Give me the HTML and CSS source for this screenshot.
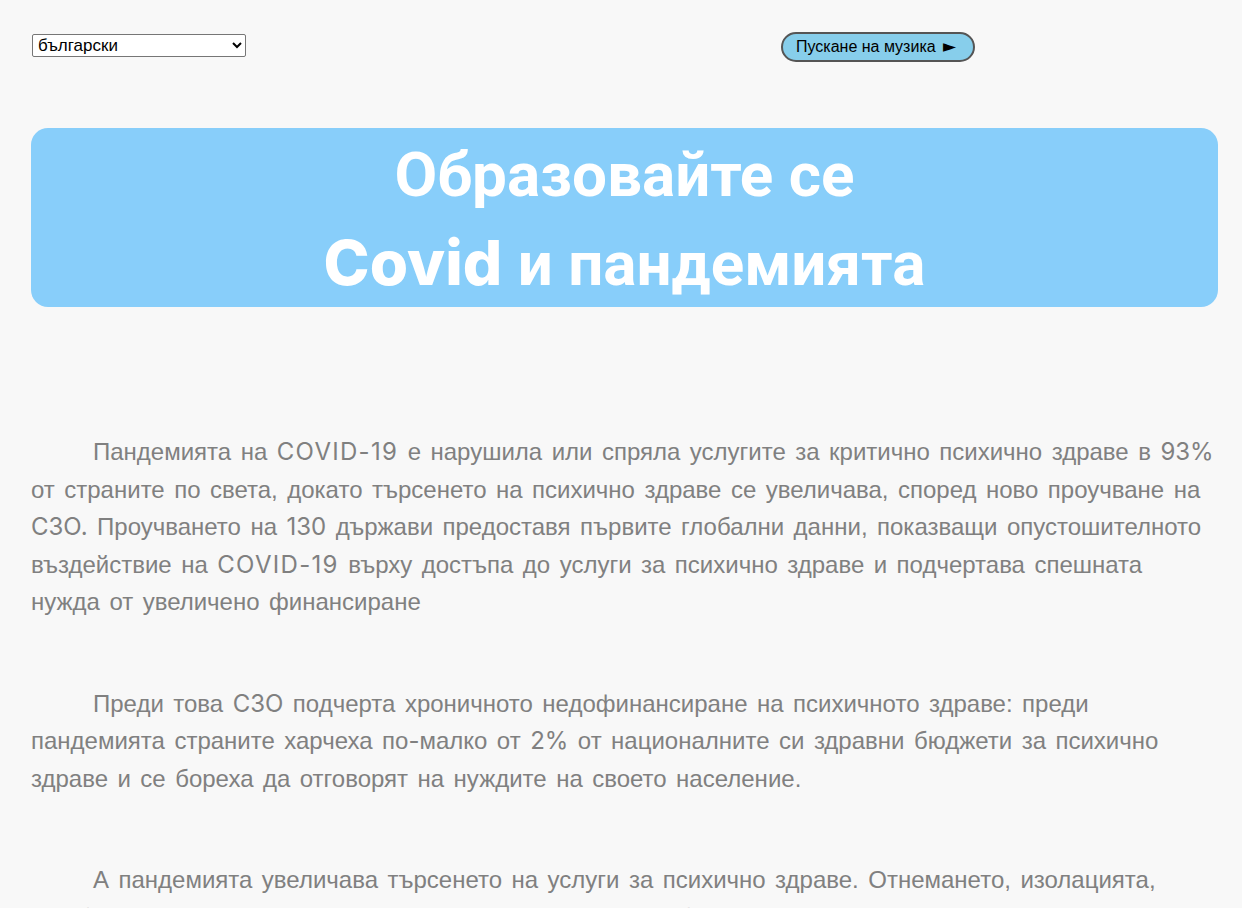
FILE: index.html
```html
<!DOCTYPE html>
<html lang="bg">
<head>
<meta charset="utf-8">
<title>Образовайте се</title>
<link rel="stylesheet" href="styles.css">
</head>
<body>
<div class="page">
  <header class="topbar">
    <select class="lang">
      <option>български</option>
      <option>English</option>
    </select>
    <button class="music">Пускане на музика <span class="play">►</span></button>
  </header>
  <div class="hero">
    <h1 class="hero-title">Образовайте се<br><span class="latin">Covid</span> и пандемията</h1>
  </div>
  <main class="content">
    <p class="para">Пандемията на <span class="lat wide">COVID-19</span> е нарушила или спряла услугите за критично психично здраве в <span class="lat">93%</span> от страните по света, докато търсенето на психично здраве се увеличава, според ново проучване на <span class="lat">C3O.</span> Проучването на <span class="lat">130</span> държави предоставя първите глобални данни, показващи опустошителното въздействие на <span class="lat wide">COVID-19</span> върху достъпа до услуги за психично здраве и подчертава спешната нужда от увеличено финансиране</p>
    <p class="para">Преди това <span class="lat">C3O</span> подчерта хроничното недофинансиране на психичното здраве: преди пандемията страните харчеха по<span class="lat">-</span>малко от <span class="lat">2%</span> от националните си здравни бюджети за психично здраве и се бореха да отговорят на нуждите на своето население.</p>
    <p class="para">А пандемията увеличава търсенето на услуги за психично здраве. Отнемането, изолацията, загубата на доходи и страхът предизвикват психични заболявания или изострят съществуващите.</p>
  </main>
</div>
</body>
</html>
```

FILE: styles.css
```css
html, body {
  margin: 0;
  padding: 0;
  background: #f8f8f8;
}
.page {
  padding: 34px 24px 0 31px;
}
.topbar {
  display: flex;
  align-items: flex-start;
  height: 94px;
}
.lang {
  width: 214px;
  height: 23px;
  margin-left: 1px;
  font-family: "Liberation Sans", Arial, sans-serif;
  font-size: 17px;
  color: #000;
  background: #fff;
  border: 1px solid #767676;
  border-radius: 2px;
  padding: 0 1px;
}
.music {
  margin-left: 535px;
  margin-top: -2px;
  height: 30px;
  padding: 0 17px 0 13px;
  font-family: "Liberation Sans", Arial, sans-serif;
  font-size: 16px;
  color: #000;
  background: #87ceeb;
  border: 2px solid #555;
  border-radius: 15px;
}
.music .play {
  font-family: "DejaVu Sans", sans-serif;
  font-size: 17px;
  line-height: 1;
  margin-left: 3px;
}
.hero {
  background: #88cefa;
  border-radius: 17px;
  height: 179px;
  display: flex;
  justify-content: center;
  align-items: flex-start;
}
.hero-title {
  margin: 0;
  padding-top: 3px;
  font-family: Roboto, "Liberation Sans", sans-serif;
  font-weight: 700;
  font-size: 62px;
  line-height: 88px;
  color: #fff;
  text-align: center;
}
.hero-title .latin {
  font-family: "Inter", sans-serif;
  font-weight: 800;
}
.content {
  padding-top: 126px;
}
.para {
  margin: 0 0 64px;
  font-family: "Liberation Sans", Arial, sans-serif;
  font-size: 24px;
  line-height: 37.5px;
  color: #808080;
  text-indent: 62px;
  word-spacing: 2.8px;
}
.para .lat {
  font-family: "Inter", sans-serif;
  font-weight: 400;
}
.para .wide {
  letter-spacing: 1.3px;
}
```
